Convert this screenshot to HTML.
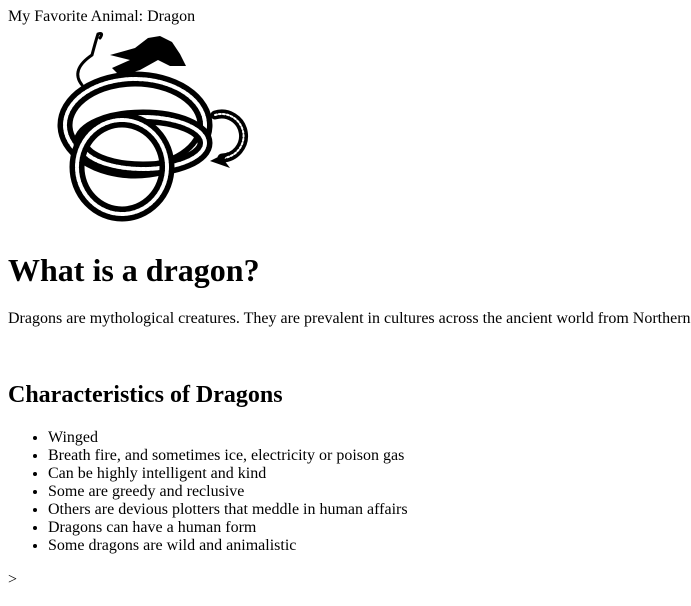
<!DOCTYPE html>
<html><head><style>
body{margin:8px;font-family:"Liberation Serif",serif;font-size:16px;color:#000;background:#fff;position:relative}
.sp{display:block;height:205px}
h1{font-size:32px;margin:21px 0;line-height:37px}
h2{font-size:24px;margin:20px 0;line-height:28px}
p{margin:16px 0;white-space:nowrap}
ul{margin:16px 0;padding-left:40px;line-height:18px}
svg{position:absolute;left:-8px;top:-8px}
</style></head><body>
<svg width="300" height="240" viewBox="0 0 300 240">
<g fill="none" stroke-linecap="round">
<ellipse cx="135" cy="125" rx="70" ry="46" stroke="#000" stroke-width="15"/>
<ellipse cx="135" cy="125" rx="70" ry="46" stroke="#fff" stroke-width="4" stroke-dasharray="3 2"/>
<ellipse cx="143" cy="143" rx="62" ry="26" stroke="#000" stroke-width="15"/>
<ellipse cx="143" cy="143" rx="62" ry="26" stroke="#fff" stroke-width="4" stroke-dasharray="3 2"/>
<ellipse cx="122" cy="167" rx="45" ry="47" stroke="#000" stroke-width="15"/>
<ellipse cx="122" cy="167" rx="45" ry="47" stroke="#fff" stroke-width="4" stroke-dasharray="3 2"/>
<path d="M215 115 A22 22 0 1 1 222 158" stroke="#000" stroke-width="9"/>
<path d="M215 115 A22 22 0 1 1 222 158" stroke="#fff" stroke-width="2" stroke-dasharray="2 2"/>
<path d="M82 85 Q70 70 92 55 Q96 40 98 34 Q104 32 100 38" stroke="#000" stroke-width="3"/>
</g>
<path d="M210 161 L228 152 L224 160 L230 168 Z" fill="#000"/>
<path d="M110 55 L135 48 L148 38 L160 36 L172 42 L180 54 L186 66 L170 66 L158 60 L140 70 L120 76 L112 68 L130 60 Z" fill="#000"/>
</svg>
<div>My Favorite Animal: Dragon</div>
<div class="sp"></div>
<h1>What is a dragon?</h1>
<p>Dragons are mythological creatures. They are prevalent in cultures across the ancient world from Northern</p>
<div style="height:17px"></div>
<h2>Characteristics of Dragons</h2>
<ul>
<li>Winged</li>
<li>Breath fire, and sometimes ice, electricity or poison gas</li>
<li>Can be highly intelligent and kind</li>
<li>Some are greedy and reclusive</li>
<li>Others are devious plotters that meddle in human affairs</li>
<li>Dragons can have a human form</li>
<li>Some dragons are wild and animalistic</li>
</ul>
<div>&gt;</div>
</body></html>
